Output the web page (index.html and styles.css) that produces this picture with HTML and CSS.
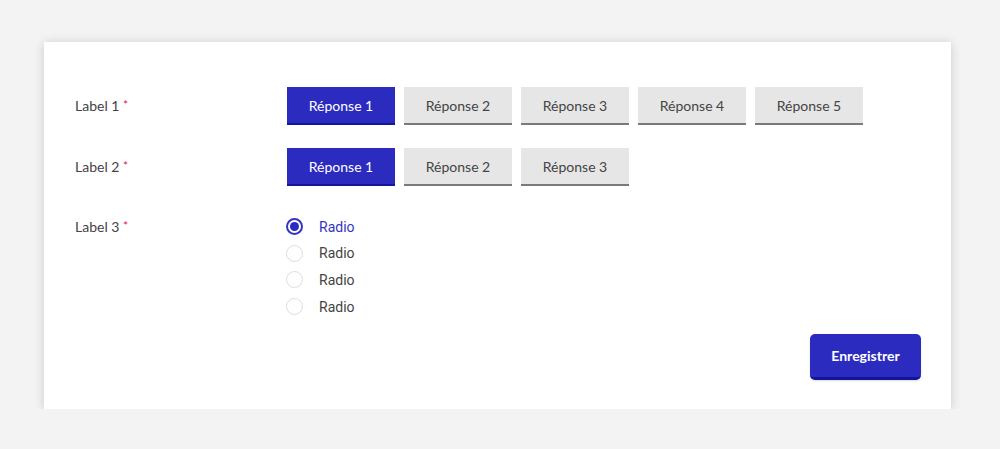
FILE: index.html
```html
<!DOCTYPE html>
<html lang="fr">
<head>
<meta charset="utf-8">
<title>Formulaire</title>
<link rel="stylesheet" href="styles.css">
</head>
<body>
<div class="card">
  <div class="row">
    <div class="label">Label 1 <span class="req">*</span></div>
    <div class="choices">
      <button class="choice active">Réponse 1</button>
      <button class="choice">Réponse 2</button>
      <button class="choice">Réponse 3</button>
      <button class="choice">Réponse 4</button>
      <button class="choice">Réponse 5</button>
    </div>
  </div>
  <div class="row row2">
    <div class="label">Label 2 <span class="req">*</span></div>
    <div class="choices">
      <button class="choice active">Réponse 1</button>
      <button class="choice">Réponse 2</button>
      <button class="choice">Réponse 3</button>
    </div>
  </div>
  <div class="row row3">
    <div class="label label3">Label 3 <span class="req">*</span></div>
    <div class="radios">
      <label class="radio checked"><span class="dot"></span><span class="rtext">Radio</span></label>
      <label class="radio"><span class="dot"></span><span class="rtext">Radio</span></label>
      <label class="radio"><span class="dot"></span><span class="rtext">Radio</span></label>
      <label class="radio"><span class="dot"></span><span class="rtext">Radio</span></label>
    </div>
  </div>
  <div class="footer">
    <button class="save">Enregistrer</button>
  </div>
</div>
</body>
</html>
```
FILE: styles.css
```css
html, body {
  margin: 0;
  padding: 0;
  background: #f3f3f3;
}
body {
  font-family: Lato, "Open Sans", sans-serif;
  color: #444;
}
.card {
  box-sizing: border-box;
  margin: 42px 0 0 44px;
  width: 907px;
  height: 367px;
  background: #fff;
  box-shadow: 0 1px 10px rgba(0,0,0,0.16);
  padding: 45px 30px 0 31px;
}
.row {
  display: flex;
  align-items: flex-start;
}
.row2 { margin-top: 23px; }
.row3 { margin-top: 27.5px; }
.label {
  width: 212px;
  height: 38px;
  font-size: 14px;
  line-height: 38px;
  color: #444;
}
.label3 { line-height: 26.6px; height: 26.6px; }
.req {
  color: #e8204a;
  font-size: 12px;
  position: relative;
  top: -2px;
}
.choices {
  display: flex;
  gap: 9px;
}
.choice {
  box-sizing: border-box;
  width: 108px;
  height: 38px;
  border: 0;
  border-bottom: 2px solid #7a7a7a;
  background: #e6e6e6;
  color: #444;
  font-family: Lato, "Open Sans", sans-serif;
  font-size: 14px;
  margin: 0;
  padding: 0;
  padding-top: 1px;
}
.choice.active {
  background: #2b2bc0;
  border-bottom-color: #15159a;
  color: #fff;
}
.radios {
  display: flex;
  flex-direction: column;
}
.radio {
  display: flex;
  align-items: center;
  height: 26.6px;
  margin-left: -1px;
}
.dot {
  box-sizing: border-box;
  width: 17px;
  height: 17px;
  border-radius: 50%;
  border: 1.5px solid #ddd;
  background: #fff;
  display: flex;
  align-items: center;
  justify-content: center;
}
.radio.checked .dot {
  border: 2px solid #3434c4;
}
.radio.checked .dot::after {
  content: "";
  width: 9px;
  height: 9px;
  border-radius: 50%;
  background: #2b2bc0;
}
.rtext {
  margin-left: 16px;
  font-family: Roboto, "Liberation Sans", sans-serif;
  font-size: 14px;
  color: #444;
}
.radio.checked .rtext { color: #3434c4; }
.footer {
  display: flex;
  justify-content: flex-end;
  margin-top: 14px;
}
.save {
  box-sizing: border-box;
  width: 111px;
  height: 46px;
  border: 0;
  border-bottom: 3px solid #14149a;
  border-radius: 5px;
  background: #2b2bc0;
  color: #fff;
  font-family: Lato, "Open Sans", sans-serif;
  font-weight: bold;
  font-size: 14px;
  padding: 0;
  box-shadow: 0 1px 2px rgba(0,0,0,0.15);
}
```
